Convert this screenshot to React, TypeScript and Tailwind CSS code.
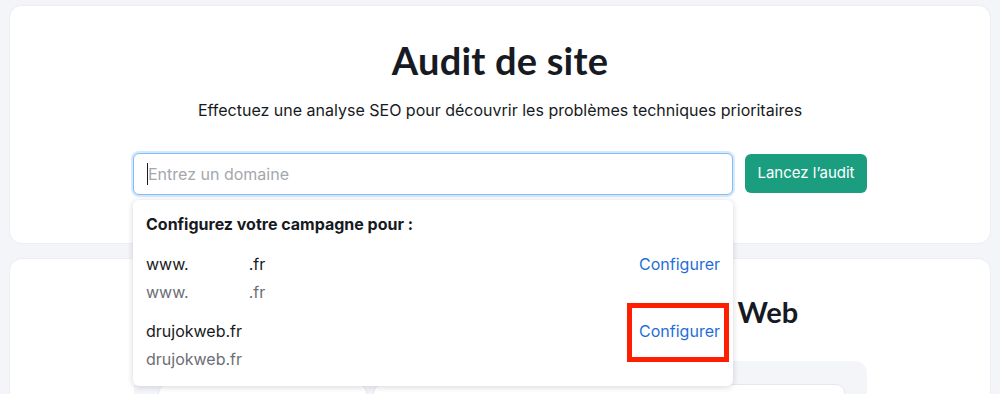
import { useState } from 'react'

const domaines = [
  { nom: 'www.', ext: '.fr', masque: true },
  { nom: 'drujokweb.fr', ext: '', masque: false },
]

export default function App() {
  const [valeur, setValeur] = useState('')

  return (
    <div className="h-[394px] overflow-hidden bg-[#f4f5f9] px-[10px] pt-[6px] font-['Inter',sans-serif] text-[#171a22]">

      {/* Carte audit */}
      <div className="relative z-10 h-[237px] rounded-xl bg-white shadow-[0_0_0_1px_#eceef3]">
        <div className="flex flex-col items-center pt-[30px]">
          <h1 className="font-['Lato',sans-serif] text-[38px] leading-[48px] font-bold tracking-[0.2px] text-[#171a22]">
            Audit de site
          </h1>
          <p className="mt-[14px] text-[16px] leading-6 text-[#171a22]">
            Effectuez une analyse SEO pour découvrir les problèmes techniques prioritaires
          </p>

          <div className="mt-[31px] flex items-start gap-3">
            <div className="relative w-[600px]">
              <div className="flex h-[42px] items-center rounded-md border border-[#82bdf3] bg-white px-[13px] shadow-[0_0_0_2px_#d6e9fc]">
                <span className="h-[22px] w-px bg-[#171a22]" />
                <input
                  value={valeur}
                  onChange={(e) => setValeur(e.target.value)}
                  placeholder="Entrez un domaine"
                  className="w-full bg-transparent text-[16px] text-[#171a22] outline-none placeholder:text-[#a4a7ae]"
                />
              </div>

              {/* Menu déroulant */}
              <div className="absolute left-0 top-[47px] w-[600px] rounded-md bg-white pb-[7px] shadow-[0_1px_6px_rgba(30,35,60,0.18)]">
                <div className="px-[13px] pt-[14px] pb-[11px] text-[16px] leading-5 font-bold text-[#171a22]">
                  Configurez votre campagne pour :
                </div>
                {domaines.map((d, i) => (
                  <div key={i} className="flex items-start justify-between px-[13px] pt-[5px] pb-[6px]">
                    <div className="text-[16px] leading-[28px]">
                      <div className="text-[#171a22]">
                        {d.nom}
                        {d.masque && <span className="inline-block w-[60px]" />}
                        {d.ext}
                      </div>
                      <div className="text-[#6c6e75]">
                        {d.nom}
                        {d.masque && <span className="inline-block w-[60px]" />}
                        {d.ext}
                      </div>
                    </div>
                    <div className="relative mt-px">
                      <button className="block text-[16px] leading-[26px] text-[#1f6fd8]">Configurer</button>
                      {i === 1 && (
                        <div className="absolute left-[-12px] top-[-15px] h-[59px] w-[102px] border-[5px] border-[#ff1e00]" />
                      )}
                    </div>
                  </div>
                ))}
              </div>
            </div>

            <button className="mt-px h-[39px] w-[122px] rounded-md bg-[#1a9e7f] text-[15px] text-white">
              Lancez l’audit
            </button>
          </div>
        </div>
      </div>

      {/* Carte projets */}
      <div className="mt-4 h-[200px] rounded-xl bg-white shadow-[0_0_0_1px_#eceef3]">
        <div className="flex flex-col items-center pt-[35px]">
          <h2 className="font-['Lato',sans-serif] text-[29px] leading-9 font-bold text-[#171a22]">
            Ce que vous pouvez vérifier sur votre site Web
          </h2>
          <div className="mt-[31px] flex w-[733px] gap-2 rounded-xl bg-[#f4f5f9] pt-6 pl-[25px] pr-[23px]">
            <div className="h-[60px] w-[207px] rounded-lg bg-white shadow-[0_0_0_1px_#e6e8ee]" />
            <div className="h-[60px] flex-1 rounded-lg bg-white shadow-[0_0_0_1px_#e6e8ee]" />
          </div>
        </div>
      </div>

    </div>
  )
}
